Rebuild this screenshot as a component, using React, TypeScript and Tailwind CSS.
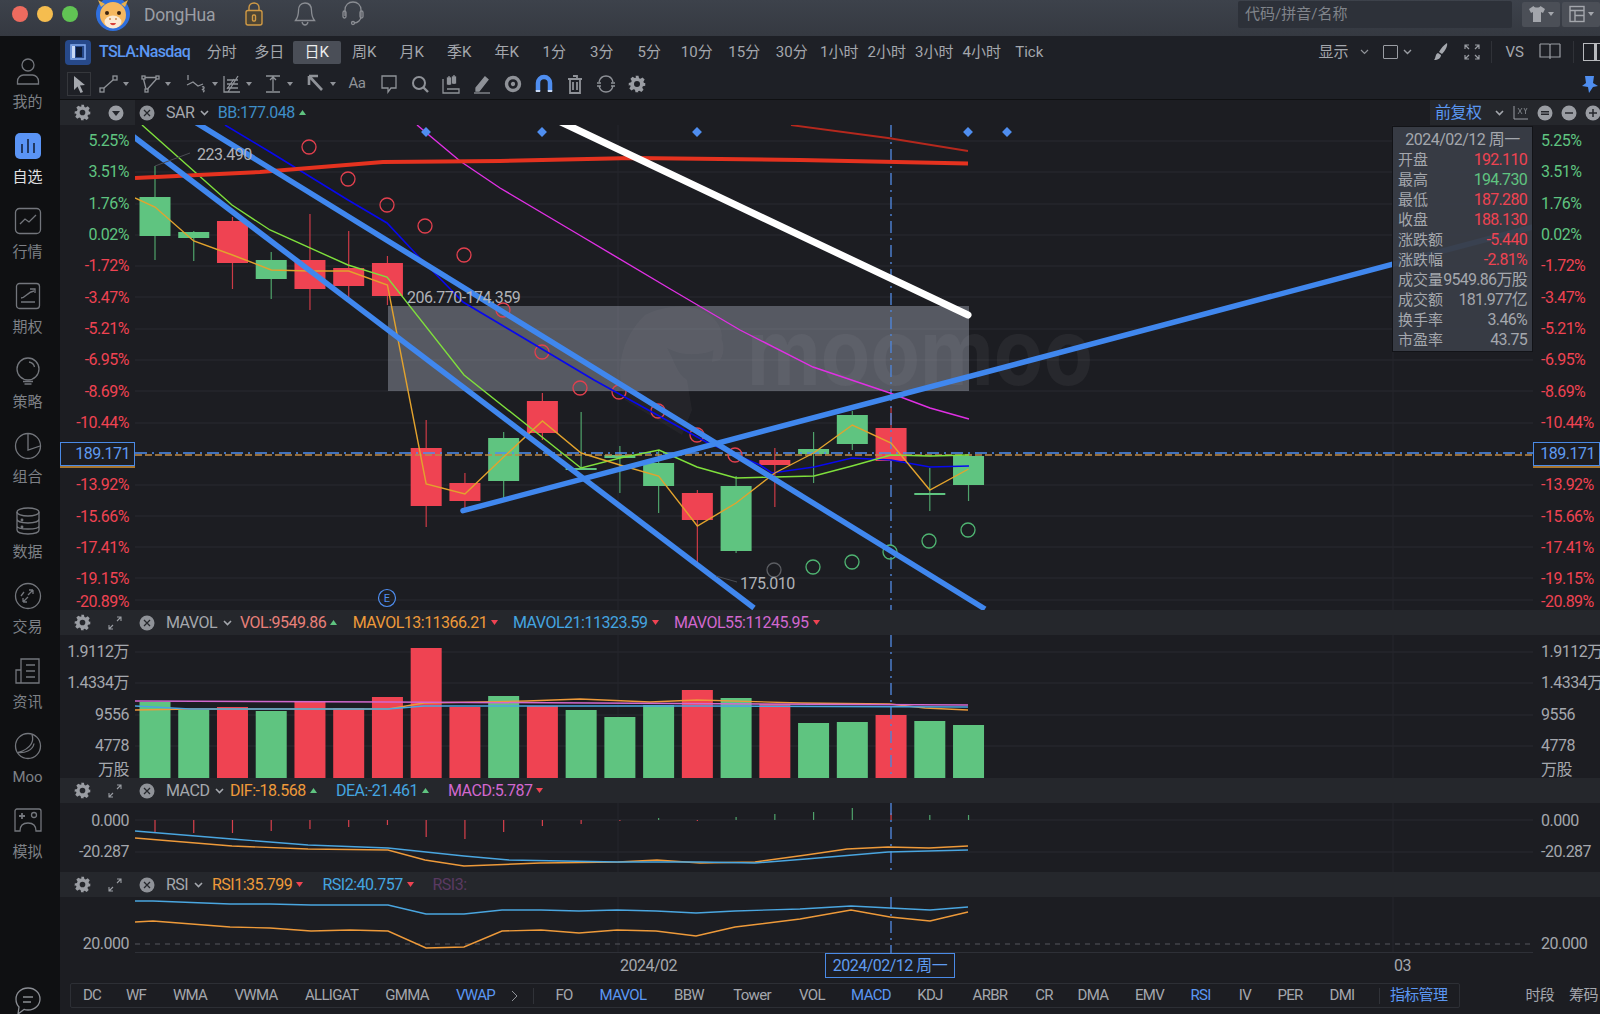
import React from "react";

const GREEN = "#5fc480";
const RED = "#ef4352";
const THICK = "#4087ee";

const xOf = (i: number) => 155 + i * 38.74;
const pts = (list: number[][]) => list.map((p) => p.join(",")).join(" ");
const series = (ys: number[]) => ys.map((y, i) => [xOf(i), y]);

// isUp, body top, body bottom, wick top, wick bottom
const candles: [boolean, number, number, number, number][] = [
  [true, 197, 236, 166, 260],
  [true, 232, 238, 231, 261],
  [false, 221, 263, 217, 289],
  [true, 260, 279, 252, 299],
  [false, 260, 289, 214, 310],
  [false, 268, 286, 231, 298],
  [false, 263, 296, 256, 305],
  [false, 448, 506, 420, 527],
  [false, 483, 501, 473, 508],
  [true, 438, 481, 432, 498],
  [false, 401, 433, 393, 440],
  [true, 468, 470, 412, 470],
  [true, 455, 458, 446, 493],
  [true, 463, 486, 450, 513],
  [false, 493, 520, 490, 563],
  [true, 486, 551, 476, 553],
  [false, 460, 465, 448, 507],
  [true, 449, 454, 432, 483],
  [true, 415, 444, 411, 450],
  [false, 428, 461, 407, 467],
  [true, 493, 495, 468, 511],
  [true, 456, 485, 456, 501],
];

const orangeMa = [
  [135, 198],
  ...series([207, 241, 255, 270, 271, 271, 285, 484, 494, 457, 421, 453, 465, 476, 526, 503, 473, 453, 425, 443, 490, 469]),
];
const limeMa = [
  [142, 125], [232, 205], [270, 230], [348, 265], [387, 277], [464, 375], [581, 468], [620, 458], [659, 450],
  [697, 467], [736, 478], [775, 477], [814, 476], [852, 466], [891, 455], [930, 456], [969, 455],
];
const navyMa = [
  [225, 125], [270, 152], [348, 200], [387, 223], [417, 255], [463, 302], [500, 324], [594, 380], [708, 443],
  [760, 465], [772, 473], [814, 467], [852, 458], [891, 460], [930, 467], [969, 466],
];
const pinkMa = [
  [417, 125], [460, 161], [500, 188], [576, 233], [672, 290], [740, 330], [813, 367], [890, 393], [930, 408], [969, 419],
];

const sarRed = [
  [309, 147], [348, 179], [387, 205], [425, 226], [464, 255], [503, 310], [542, 352], [580, 388], [619, 392], [658, 411], [697, 435], [735, 455],
];
const sarGreen = [[813, 567], [852, 562], [890, 552], [929, 541], [968, 530]];

const volBars: [boolean, number][] = [
  [true, 702], [true, 710], [false, 707], [true, 711], [false, 701], [false, 708], [false, 697], [false, 648],
  [false, 707], [true, 696], [false, 706], [true, 710], [true, 717], [true, 705], [false, 690], [true, 698],
  [false, 704], [true, 723], [true, 722], [false, 715], [true, 721], [true, 725],
];

const macdBars: [boolean, number][] = [
  [false, 833], [false, 833], [false, 833], [false, 831], [false, 829], [false, 827], [false, 825], [false, 837],
  [false, 839], [false, 832], [false, 826], [false, 824], [false, 821], [true, 818], [false, 821], [true, 817],
  [true, 814], [true, 812], [true, 808], [false, 813], [true, 815], [true, 815],
];

const leftPct: [string, boolean][] = [
  ["5.25%", true], ["3.51%", true], ["1.76%", true], ["0.02%", true], ["-1.72%", false], ["-3.47%", false], ["-5.21%", false],
  ["-6.95%", false], ["-8.69%", false], ["-10.44%", false],
];
const leftPct2: [string, boolean][] = [["-13.92%", false], ["-15.66%", false], ["-17.41%", false], ["-19.15%", false]];

const gridYs = [141, 172, 204, 235, 266, 297, 329, 360, 391, 423, 485, 516, 547, 578, 600];

function Crosshair({ y1, y2 }: { y1: number; y2: number }) {
  return <line x1={891} x2={891} y1={y1} y2={y2} stroke="#4f84d6" strokeWidth={1.4} strokeDasharray="12 5 2 5" />;
}

function PctAxis({ side }: { side: "left" | "right" }) {
  const align = side === "left" ? "justify-end pr-[6px]" : "justify-start pl-[8px]";
  const row = `flex h-[31.3px] items-center whitespace-nowrap ${align}`;
  return (
    <div className="pt-[0.5px] text-[16px] tracking-[-0.5px]">
      {leftPct.map(([t, up]) => (
        <div key={t} className={`${row} ${up ? "text-[#5fc480]" : "text-[#ef4352]"}`}>
          {t}
        </div>
      ))}
      <div className="flex h-[31.3px] items-center">
        <div className="flex h-[24px] w-full items-center justify-end border border-[#4a8ae6] pr-[4px] text-[#5f9bf0] shadow-[0_2px_0_#a8752e]">
          189.171
        </div>
      </div>
      {leftPct2.map(([t]) => (
        <div key={t} className={`${row} text-[#ef4352]`}>
          {t}
        </div>
      ))}
      <div className={`${row} -mt-[9px] text-[#ef4352]`}>-20.89%</div>
    </div>
  );
}

function GrayAxis({ labels, side, pad }: { labels: string[]; side: "left" | "right"; pad: string }) {
  const align = side === "left" ? "justify-end pr-[6px]" : "justify-start pl-[8px]";
  return (
    <div className={`${pad} overflow-hidden text-[16px] tracking-[-0.5px] text-[#a4a7ad]`}>
      {labels.map((t) => (
        <div key={t} className={`flex h-[31.3px] items-center whitespace-nowrap ${align} ${t === "万股" ? "-mt-[7px]" : ""}`}>
          {t}
        </div>
      ))}
    </div>
  );
}

function Tri({ up, red }: { up?: boolean; red?: boolean }) {
  return (
    <svg width="7" height="5" viewBox="0 0 7 5" className="ml-[4px] shrink-0">
      <path d={up ? "M3.5 0L7 5H0z" : "M0 0h7L3.5 5z"} fill={red ? RED : GREEN} />
    </svg>
  );
}

function Chevron() {
  return (
    <svg width="9" height="6" viewBox="0 0 9 6" className="ml-[6px] shrink-0">
      <path d="M1 1l3.5 3.5L8 1" stroke="#a4a7ad" strokeWidth="1.6" fill="none" />
    </svg>
  );
}

function Gear({ size = 17 }: { size?: number }) {
  return (
    <svg width={size} height={size} viewBox="0 0 24 24" className="shrink-0">
      <path
        fillRule="evenodd"
        fill="#9a9da3"
        d="M10 1h4l.7 3.2 1.9.8 2.8-1.7 2.8 2.8-1.7 2.8.8 1.9L23 10.5v3.9l-3.2.7-.8 1.9 1.7 2.8-2.8 2.8-2.8-1.7-1.9.8L14 23h-4l-.7-3.2-1.9-.8-2.8 1.7-2.8-2.8 1.7-2.8-.8-1.9L1 14.4v-3.9l3.2-.7.8-1.9-1.7-2.8 2.8-2.8 2.8 1.7 1.9-.8zM12 8a4 4 0 100 8 4 4 0 000-8z"
      />
    </svg>
  );
}

function CloseDot() {
  return (
    <svg width="16" height="16" viewBox="0 0 16 16" className="shrink-0">
      <circle cx="8" cy="8" r="7.5" fill="#8f9298" />
      <path d="M5 5l6 6M11 5l-6 6" stroke="#25272c" strokeWidth="1.3" />
    </svg>
  );
}

function Expand() {
  return (
    <svg width="14" height="14" viewBox="0 0 14 14" fill="none" stroke="#9a9da3" strokeWidth="1.1" className="shrink-0">
      <path d="M1 9v4h4M1 13l4-4M13 5V1H9M13 1L9 5" />
    </svg>
  );
}

function IndicatorHeader({ name, nameW, items }: { name: string; nameW: string; items: React.ReactNode }) {
  return (
    <div className="flex h-[25px] items-center bg-[#25272c] text-[16px] tracking-[-0.5px]">
      <div className="flex w-[75px] items-center pl-[14px]">
        <Gear />
        <div className="ml-[17px]">
          <Expand />
        </div>
      </div>
      <div className="ml-[4px]">
        <CloseDot />
      </div>
      <div className={`ml-[11px] flex items-center text-[#a4a7ad] ${nameW}`}>
        {name}
        <Chevron />
      </div>
      {items}
    </div>
  );
}

function Reading({ text, color, width, up, red }: { text: string; color: string; width: string; up?: boolean; red?: boolean }) {
  return (
    <div className={`flex items-center whitespace-nowrap ${color} ${width}`}>
      {text}
      <Tri up={up} red={red} />
    </div>
  );
}

function Ico({ children, w = 20 }: { children: React.ReactNode; w?: number }) {
  return (
    <svg width={w} height={20} viewBox={`0 0 ${w} 20`} fill="none" stroke="#8f9298" strokeWidth="1.3" className="shrink-0">
      {children}
    </svg>
  );
}

function ToolCaret() {
  return (
    <svg width="6" height="4" viewBox="0 0 6 4" className="ml-[4px] shrink-0">
      <path d="M0 0h6L3 4z" fill="#8f9298" />
    </svg>
  );
}

function NavIcon({ children }: { children: React.ReactNode }) {
  return (
    <svg width="28" height="28" viewBox="0 0 28 28" fill="none" stroke="#73767c" strokeWidth="1.3">
      {children}
    </svg>
  );
}

const nav: { label: string; icon: React.ReactNode; active?: boolean }[] = [
  {
    label: "我的",
    icon: (
      <NavIcon>
        <circle cx="14" cy="8" r="6" />
        <path d="M3.5 27v-2.5c0-4 3-6.500 6-6.500h9c3 0 6 2.500 6 6.500V27z" />
      </NavIcon>
    ),
  },
  {
    label: "自选",
    active: true,
    icon: (
      <svg width="26" height="26" viewBox="0 0 26 26">
        <rect width="26" height="26" rx="5" fill="#5a94f5" />
        <path d="M7 11v9M13 6v14M19 10v10" stroke="#14233f" strokeWidth="1.6" />
      </svg>
    ),
  },
  {
    label: "行情",
    icon: (
      <NavIcon>
        <rect x="1.5" y="1.5" width="25" height="25" rx="4" />
        <path d="M6 17l5-5 4 3 7-7" />
      </NavIcon>
    ),
  },
  {
    label: "期权",
    icon: (
      <NavIcon>
        <rect x="2.5" y="1.5" width="23" height="25" rx="3" />
        <path d="M7 16c5 0 6-6 13-7M16 7h5v4M7 20h14" />
      </NavIcon>
    ),
  },
  {
    label: "策略",
    icon: (
      <NavIcon>
        <circle cx="14" cy="12" r="11" />
        <path d="M15 5c3 .5 5 2.500 5.500 5M9 24.500h10M10.500 27h7" />
      </NavIcon>
    ),
  },
  {
    label: "组合",
    icon: (
      <NavIcon>
        <circle cx="14" cy="14" r="12.5" />
        <path d="M14 1.5V18l12-4" />
      </NavIcon>
    ),
  },
  {
    label: "数据",
    icon: (
      <NavIcon>
        <ellipse cx="14" cy="5" rx="11" ry="4" />
        <path d="M3 5v18c0 2.500 5 4 11 4s11-1.500 11-4V5M3 12c0 2.500 5 4 11 4s11-1.500 11-4M3 19c0 2.500 5 3 11 3s11-.5 11-3" />
        <circle cx="8" cy="13" r=".8" />
        <circle cx="8" cy="20" r=".8" />
      </NavIcon>
    ),
  },
  {
    label: "交易",
    icon: (
      <NavIcon>
        <circle cx="14" cy="14" r="12.5" />
        <path d="M19 8l-5 5M19 8h-4M19 8v4M9 20l5-5M9 20h4M9 20v-4M7 14l3-4" />
      </NavIcon>
    ),
  },
  {
    label: "资讯",
    icon: (
      <NavIcon>
        <path d="M7 26V2h18v24zM7 13H2v13h5M12 8h9M12 14h9M12 20h9" />
      </NavIcon>
    ),
  },
  {
    label: "Moo",
    icon: (
      <NavIcon>
        <circle cx="14" cy="14" r="12.5" />
        <path d="M18 2.500c2 6 0 14-14 18 6 1 15-2 16-9" />
      </NavIcon>
    ),
  },
  {
    label: "模拟",
    icon: (
      <NavIcon>
        <path d="M3 2h22a2 2 0 012 2v20h-5c0-5-2-8-8-8s-8 3-8 8H1V4a2 2 0 012-2z" />
        <path d="M8 6v6M5 9h6" strokeWidth="1.8" />
        <circle cx="20" cy="8" r="2.5" />
      </NavIcon>
    ),
  },
];

function Sidebar() {
  return (
    <div className="flex h-full w-[60px] shrink-0 flex-col items-center bg-[#0f1012] pt-[21px] pr-[5px]">
      {nav.map((n) => (
        <div key={n.label} className="flex h-[75px] w-full flex-col items-center">
          <div className="flex h-[28px] items-center">{n.icon}</div>
          <div className={`mt-[7px] text-[15px] leading-[20px] ${n.active ? "text-[#e0e1e3]" : "text-[#7d8086]"}`}>{n.label}</div>
        </div>
      ))}
      <div className="mt-auto -mb-[2px] h-[30px]">
        <svg width="28" height="30" viewBox="0 0 28 30" fill="none" stroke="#8a8d93" strokeWidth="1.3">
          <path d="M14 2c7 0 12 5 12 11s-5 11-12 11c-1.500 0-3-.2-4-.6L4 28l1-7c-2-2-3-5-3-8C2 7 7 2 14 2z" />
          <path d="M9 11h10M9 16h8" strokeWidth="1.7" />
        </svg>
      </div>
    </div>
  );
}

function TopBar() {
  return (
    <div className="flex h-[36px] shrink-0 items-center overflow-hidden bg-gradient-to-b from-[#3d424b] to-[#353941] pb-[8px]">
      <div className="ml-[12px] h-[16px] w-[16px] rounded-full bg-[#ed6b5f]" />
      <div className="ml-[9px] h-[16px] w-[16px] rounded-full bg-[#f5bd4f]" />
      <div className="ml-[9px] h-[16px] w-[16px] rounded-full bg-[#61c454]" />
      <svg width="36" height="36" viewBox="0 -5 36 36" className="ml-[17px] shrink-0">
        <circle cx="18" cy="13" r="17" fill="#2f6fdd" />
        <path d="M6 6l-3-7 7 4zM30 6l3-7-7 4z" fill="#e8b04c" />
        <ellipse cx="18" cy="14" rx="13" ry="13" fill="#f5b860" />
        <ellipse cx="18" cy="21" rx="8.5" ry="6.5" fill="#fbe9d3" />
        <circle cx="12" cy="12" r="2" fill="#3b2410" />
        <circle cx="24" cy="12" r="2" fill="#3b2410" />
        <path d="M15 22c1 3 5 3 6 0z" fill="#d8403a" />
        <circle cx="15" cy="18" r="1" fill="#c98a50" />
        <circle cx="21" cy="18" r="1" fill="#c98a50" />
      </svg>
      <div className="mt-[2px] ml-[13px] w-[73px] text-[17.5px] tracking-[-0.2px] text-[#9b9ea4]">DongHua</div>
      <svg width="20" height="24" viewBox="0 0 20 24" fill="none" stroke="#d19a45" strokeWidth="1.4" className="ml-[27px]">
        <path d="M5 9V5.500C5 3 7 1 10 1s5 2 5 4.500V9" />
        <rect x="2" y="8.5" width="16" height="14.5" rx="2" fill="#4d4534" />
        <rect x="8.5" y="13" width="3" height="6" rx="1" />
      </svg>
      <svg width="22" height="24" viewBox="0 0 22 24" fill="none" stroke="#8a8d93" strokeWidth="1.3" className="ml-[30px]">
        <path d="M11 1c-4.500 0-6.500 3.500-6.500 7.500 0 5-1.500 8-3 10h19c-1.500-2-3-5-3-10C17.500 4.500 15.500 1 11 1zM8 20c.5 2 1.500 3 3 3s2.500-1 3-3" />
      </svg>
      <svg width="22" height="26" viewBox="0 0 22 26" fill="none" stroke="#8a8d93" strokeWidth="1.3" className="ml-[26px]">
        <path d="M3 15V9c0-5 3.500-8 8-8s8 3 8 8v6c0 4-3 7-7 7" />
        <rect x="1" y="10" width="3" height="7" rx="1.5" />
        <rect x="18" y="10" width="3" height="7" rx="1.5" />
        <circle cx="11" cy="22" r="1.5" />
      </svg>
      <div className="ml-auto flex h-[27px] w-[274px] items-center rounded-[2px] bg-[#2d3139] pl-[7px] text-[15px] text-[#80848b]">
        代码/拼音/名称
      </div>
      <div className="ml-[10px] flex h-[25px] w-[38px] items-center justify-center gap-[3px] rounded-[2px] bg-[#4b4f57]">
        <svg width="16" height="18" viewBox="0 0 16 18">
          <path d="M4.5 1L0 4l2 4 2-1v10h8V7l2 1 2-4-4.500-3C10.500 3 5.500 3 4.500 1z" fill="#a3a6ac" />
        </svg>
        <Caret6 />
      </div>
      <div className="ml-[2px] flex h-[25px] w-[38px] items-center justify-center gap-[3px] rounded-[2px] bg-[#4b4f57]">
        <svg width="16" height="18" viewBox="0 0 16 18" fill="none" stroke="#a3a6ac" strokeWidth="1.4">
          <rect x="1" y="1.5" width="14" height="15" />
          <path d="M1 5.500h14M6 5.500v11M6 10.500h9" />
        </svg>
        <Caret6 />
      </div>
    </div>
  );
}

function Caret6() {
  return (
    <svg width="6" height="4" viewBox="0 0 6 4">
      <path d="M0 0h6L3 4z" fill="#a3a6ac" />
    </svg>
  );
}

const periods = ["分时", "多日", "日K", "周K", "月K", "季K", "年K", "1分", "3分", "5分", "10分", "15分", "30分", "1小时", "2小时", "3小时", "4小时", "Tick"];

function PeriodRow() {
  return (
    <div className="flex h-[32px] shrink-0 items-center bg-[#1e2026] text-[15px] text-[#a4a7ad]">
      <div className="ml-[5px] flex h-[25px] w-[26px] items-center justify-center rounded-[4px] bg-[#27498a]">
        <svg width="16" height="16" viewBox="0 0 16 16">
          <rect x="1" y="1" width="14" height="14" fill="none" stroke="#7ea6ea" strokeWidth="1.6" />
          <rect x="6" y="3" width="6" height="10" fill="#0e1c38" />
          <rect x="2" y="2" width="3" height="12" fill="#c7d8f5" />
        </svg>
      </div>
      <div className="ml-[8px] w-[99px] whitespace-nowrap text-[16px] font-medium tracking-[-0.6px] text-[#5b97f2]">TSLA:Nasdaq</div>
      {periods.map((p) => (
        <div key={p} className={`flex h-[23px] w-[47.5px] shrink-0 items-center justify-center whitespace-nowrap rounded-[2px] ${p === "日K" ? "bg-[#4a4e57] text-[#eceded]" : ""}`}>
          {p}
        </div>
      ))}
      <div className="ml-auto flex items-center">{displayTools}</div>
    </div>
  );
}

const displayTools = (
  <>
    <span>显示</span>
    <svg width="9" height="6" viewBox="0 0 9 6" className="ml-[11px]">
      <path d="M1 1l3.500 3.500L8 1" stroke="#8f9298" strokeWidth="1.2" fill="none" />
    </svg>
    <div className="ml-[14px] h-[14px] w-[15px] rounded-[1px] border border-[#9a9da3]" />
    <svg width="9" height="6" viewBox="0 0 9 6" className="ml-[5px]">
      <path d="M1 1l3.500 3.500L8 1" stroke="#9a9da3" strokeWidth="1.4" fill="none" />
    </svg>
    <svg width="16" height="18" viewBox="0 0 16 18" className="ml-[21px]">
      <path d="M14 0c1 3-2 8-5 11l-3-2C8 5 11 2 14 0zM5 10l3 2c0 3-3 5-7 5 2-2 1-6 4-7z" fill="#a4a7ad" />
    </svg>
    <svg width="16" height="16" viewBox="0 0 16 16" fill="none" stroke="#9a9da3" strokeWidth="1.2" className="ml-[15px]">
      <path d="M1 5V1h4M15 5V1h-4M1 11v4h4M15 11v4h-4M1 1l4 4M15 1l-4 4M1 15l4-4M15 15l-4-4" />
    </svg>
    <div className="ml-[11px] h-[22px] w-px bg-[#303238]" />
    <span className="ml-[14px]">VS</span>
    <svg width="22" height="18" viewBox="0 0 22 18" fill="none" stroke="#9a9da3" strokeWidth="1.2" className="ml-[15px]">
      <path d="M1 1h9c.6 0 1 .4 1 1v14M21 1h-9c-.6 0-1 .4-1 1M1 1v13h10M21 1v13H11" />
    </svg>
    <div className="ml-[12px] h-[22px] w-px bg-[#303238]" />
    <div className="ml-[9px] h-[18px] w-[17px] border border-r-0 border-[#b8babe] pl-[10px]">
      <div className="h-full w-[3px] bg-[#b8babe]" />
    </div>
  </>
);

function DrawRow() {
  return (
    <div className="flex h-[32px] shrink-0 items-center border-b border-[#0f1012] bg-[#1e2026]">
      <div className="ml-[7px] flex h-[24px] w-[24px] items-center justify-center border border-[#35373c]">
        <svg width="13" height="18" viewBox="0 0 13 18">
          <path d="M1 1l11 9-5 .5 3 6.500-2.500 1-3-6.500L1 15z" fill="#a4a7ad" />
        </svg>
      </div>
      <div className="ml-[8px] flex w-[42px] items-center">
        <Ico>
          <rect x="1" y="14" width="4" height="4" />
          <rect x="14" y="2" width="4" height="4" />
          <path d="M5 14l9-8" />
        </Ico>
        <ToolCaret />
      </div>
      <div className="flex w-[45px] items-center">
        <Ico>
          <rect x="1" y="2" width="3" height="3" />
          <rect x="15" y="2" width="3" height="3" />
          <rect x="4" y="15" width="3" height="3" />
          <path d="M4 3.500h11M15.500 5L6.500 15M2.500 5L5 15" />
        </Ico>
        <ToolCaret />
      </div>
      <div className="flex w-[36px] items-center">
        <Ico w={22}>
          <path d="M2 1v5M1 11l6-3 5 4 5-2M16 13c2-1 3 1 1 2l-1 1c2-1 3 1 1 2" />
        </Ico>
        <ToolCaret />
      </div>
      <div className="flex w-[41px] items-center">
        <Ico>
          <path d="M2 2v16h16M5 6h11M5 10h11M5 14h11M16 2L6 18M12 5L5 15" />
        </Ico>
        <ToolCaret />
      </div>
      <div className="flex w-[43px] items-center">
        <Ico>
          <path d="M3 2h14M3 18h14M10 3v14M7 6l3-3 3 3" />
        </Ico>
        <ToolCaret />
      </div>
      <div className="flex w-[35px] items-center">
        <Ico>
          <path d="M3 2h9M3 2v9M3 2l13 14" strokeWidth="2.6" />
        </Ico>
        <ToolCaret />
      </div>
      <div className="flex w-[32px] justify-center text-[15px] tracking-[-0.5px] text-[#8f9298]">Aa</div>
      <div className="flex w-[31px] justify-center">
        <Ico>
          <path d="M3 2h14v12h-5l-3 4v-4H3z" />
        </Ico>
      </div>
      <div className="flex w-[31px] justify-center">
        <Ico>
          <circle cx="9" cy="9" r="6" strokeWidth="2" />
          <path d="M13 13l5 5" strokeWidth="2.4" />
        </Ico>
      </div>
      <div className="flex w-[31px] justify-center">
        <Ico>
          <path d="M2 5v14h16v-4H6M8 2v9M13 1v9" />
          <rect x="6.5" y="4" width="3" height="6" fill="#8f9298" />
          <rect x="11.5" y="3" width="3" height="6" fill="#8f9298" />
        </Ico>
      </div>
      <div className="flex w-[31px] justify-center">
        <Ico>
          <path d="M4 14L13 3l3 2.500L7 17H4z" fill="#8f9298" />
          <path d="M2 19h16" />
        </Ico>
      </div>
      <div className="flex w-[31px] justify-center">
        <Ico>
          <circle cx="10" cy="10" r="6.5" strokeWidth="3.4" />
          <circle cx="10" cy="10" r="1.5" fill="#8f9298" />
        </Ico>
      </div>
      <div className="flex w-[31px] justify-center">
        <svg width="20" height="20" viewBox="0 0 20 20" fill="none" stroke="#4f8ef0" strokeWidth="4.5">
          <path d="M4 17V9a6 6 0 0112 0v8" />
          <path d="M1.8 17h4.400M13.800 17h4.400" stroke="#c7d8f5" strokeWidth="1.8" />
        </svg>
      </div>
      <div className="flex w-[31px] justify-center">
        <Ico>
          <path d="M3 5h14M8 2h4v3M5 5v14h10V5zM8 8v8M12 8v8" strokeWidth="1.8" />
        </Ico>
      </div>
      <div className="flex w-[31px] justify-center">
        <Ico>
          <path d="M3 8c1-4 4-6 7-6s6 2 7 6M17 12c-1 4-4 6-7 6s-6-2-7-6M1 9h4M15 9h4M1 12h4M15 12h4" />
        </Ico>
      </div>
      <div className="flex w-[31px] justify-center">
        <Gear size={18} />
      </div>
      <svg width="18" height="20" viewBox="0 0 18 20" className="mr-[1px] ml-auto">
        <path d="M4 2h9l-1 7 5 3-5 1-4 6-1-6-6-1 4-3z" fill="#4f8ef0" />
      </svg>
    </div>
  );
}

function MainChart() {
  return (
    <div className="relative flex h-[485px]">
      <div className="w-[75px] shrink-0">
        <PctAxis side="left" />
      </div>
      <svg width="1398" height="485" viewBox="135 125 1398 485" className="shrink-0">
        {gridYs.map((y) => (
          <line key={y} x1={135} x2={1533} y1={y} y2={y} stroke="#282a31" strokeWidth={1} />
        ))}
        <line x1={618} x2={618} y1={125} y2={610} stroke="#24262c" />
        <line x1={1393} x2={1393} y1={125} y2={610} stroke="#24262c" />

        <text x={747} y={385} fontFamily="Inter, sans-serif" fontWeight={700} fontSize={92} fill="#fff" fillOpacity={0.05} textLength={346} lengthAdjust="spacingAndGlyphs">
          moomoo
        </text>
        <path d="M625 400c-10-30-5-60 20-85 25-12 55-12 70 5 12 14 8 30-10 33-18 3-28 0-38-5 8 14 10 26 20 32l5 30-10 25-57-35zM716 330c8 8 10 22 4 30l-8 2z" fill="#fff" fillOpacity={0.035} />

        {candles.map(([up, top, bot, wt, wb], i) => {
          const c = up ? GREEN : RED;
          const x = xOf(i);
          return (
            <g key={i}>
              <line x1={x} x2={x} y1={wt} y2={wb} stroke={up ? "#4fa36b" : "#cc3a46"} strokeWidth={1.2} />
              <rect x={x - 15.5} y={top} width={31} height={bot - top} fill={c} />
            </g>
          );
        })}

        <rect x={388} y={306} width={581} height={85} fill="#aeb4c2" fillOpacity={0.4} />

        <line x1={135} x2={1533} y1={453} y2={453} stroke="#4f8ef0" strokeWidth={1.3} strokeDasharray="12 5 2 5" />
        <line x1={135} x2={1533} y1={455} y2={455} stroke="#c08a45" strokeWidth={1.5} strokeDasharray="7 3" />
        <Crosshair y1={125} y2={610} />

        {sarRed.map(([x, y]) => (
          <circle key={x} cx={x} cy={y} r={7} fill="none" stroke="#e2404e" strokeWidth={1.3} />
        ))}
        <circle cx={774} cy={570} r={7} fill="none" stroke="#5c5e63" strokeWidth={1.3} />
        {sarGreen.map(([x, y]) => (
          <circle key={x} cx={x} cy={y} r={7} fill="none" stroke="#4fb572" strokeWidth={1.3} />
        ))}

        <polyline points={pts(navyMa)} fill="none" stroke="#0808ee" strokeWidth={1.6} />
        <polyline points={pts(pinkMa)} fill="none" stroke="#e030e4" strokeWidth={1.4} />
        <polyline points={pts(limeMa)} fill="none" stroke="#7fe03c" strokeWidth={1.4} />
        <polyline points={pts(orangeMa)} fill="none" stroke="#e3a32d" strokeWidth={1.4} />

        <polyline points="135,178 260,172 383,162 500,161 633,158 800,160 968,163.5" fill="none" stroke="#e5321f" strokeWidth={4} />
        <polyline points="791,125 888,138 968,151" fill="none" stroke="#b5281d" strokeWidth={1.8} />
        <line x1={561} y1={122} x2={968} y2={315} stroke="#fff" strokeWidth={7} strokeLinecap="round" />

        <line x1={130} y1={134} x2={754} y2={608} stroke={THICK} strokeWidth={5.5} />
        <line x1={195} y1={122} x2={985} y2={609} stroke={THICK} strokeWidth={5.5} />
        <line x1={463} y1={510.7} x2={1533} y2={227} stroke={THICK} strokeWidth={5.5} strokeLinecap="round" />

        {[426, 542, 697, 968, 1007].map((x) => (
          <rect key={x} x={x - 3.5} y={128.5} width={7} height={7} fill="#4f8ef0" transform={`rotate(45 ${x} 132)`} />
        ))}

        <line x1={155} y1={166} x2={190} y2={153} stroke="#4a4c52" />
        <line x1={716} y1={576} x2={737} y2={582} stroke="#4a4c52" />
        <g fontFamily="Roboto, sans-serif" fontSize={16} letterSpacing={-0.5} fill="#b0b2b7">
          <text x={197} y={160}>223.490</text>
          <text x={407} y={303}>206.770-174.359</text>
          <text x={740} y={589}>175.010</text>
        </g>
        <circle cx={387} cy={598} r={8.5} fill="none" stroke="#4f8ef0" strokeWidth={1.2} />
        <text x={387} y={602} textAnchor="middle" fontFamily="Roboto, sans-serif" fontSize={11} fill="#4f8ef0">
          E
        </text>
      </svg>
      <div className="w-[67px] shrink-0 overflow-hidden">
        <PctAxis side="right" />
      </div>

      <Tooltip />
    </div>
  );
}

const tipRows: [string, string, string][] = [
  ["开盘", "192.110", "text-[#ef4352]"],
  ["最高", "194.730", "text-[#5fc480]"],
  ["最低", "187.280", "text-[#ef4352]"],
  ["收盘", "188.130", "text-[#ef4352]"],
  ["涨跌额", "-5.440", "text-[#ef4352]"],
  ["涨跌幅", "-2.81%", "text-[#ef4352]"],
  ["成交量", "9549.86万股", "text-[#a4a7ad]"],
  ["成交额", "181.977亿", "text-[#a4a7ad]"],
  ["换手率", "3.46%", "text-[#a4a7ad]"],
  ["市盈率", "43.75", "text-[#a4a7ad]"],
];

function Tooltip() {
  return (
    <div className="absolute top-[1px] left-[1332px] h-[226px] w-[141px] border border-[#121317] bg-[#393d47]/95 px-[5px] pt-[3px] text-[16px] tracking-[-0.5px] text-[#a4a7ad]">
      <div className="flex h-[20px] items-center justify-center whitespace-nowrap">2024/02/12 周一</div>
      {tipRows.map(([k, v, c]) => (
        <div key={k} className="flex h-[20px] items-center justify-between whitespace-nowrap">
          <span className="text-[15px] tracking-normal">{k}</span>
          <span className={`tracking-[-0.7px] ${c}`}>{v}</span>
        </div>
      ))}
    </div>
  );
}

function SarHeader() {
  return (
    <div className="flex h-[25px] items-center text-[16px] tracking-[-0.5px]">
      <div className="flex h-full w-[75px] items-center bg-[#25272c] pl-[14px]">
        <Gear />
        <svg width="16" height="16" viewBox="0 0 16 16" className="ml-[17px]">
          <circle cx="8" cy="8" r="7.5" fill="#9a9da3" />
          <path d="M4 6h8l-4 5z" fill="#25272c" />
        </svg>
      </div>
      <div className="ml-[4px]">
        <CloseDot />
      </div>
      <div className="ml-[11px] flex w-[51.8px] items-center text-[#a4a7ad]">
        SAR
        <Chevron />
      </div>
      <Reading text="BB:177.048" color="text-[#3f8fc8]" width="w-[100px]" up />
      <div className="ml-auto flex h-full w-[170px] items-center bg-[#25272c] pl-[5px] text-[#5b97f2]">
        <span className="shrink-0 whitespace-nowrap">前复权</span>
        <svg width="9" height="6" viewBox="0 0 9 6" className="ml-[13px] shrink-0">
          <path d="M1 1l3.500 3.500L8 1" stroke="#a4a7ad" strokeWidth="1.6" fill="none" />
        </svg>
        <svg width="16" height="16" viewBox="0 0 16 16" fill="none" stroke="#9a9da3" className="ml-[9px] shrink-0">
          <path d="M1 1v13h14" />
          <path d="M5 3l4 6M9 3L5 9M11 3l1.500 3L14 3M12.500 6v3" strokeWidth=".7" />
        </svg>
        {["M4 6.800h8M4 9.200h8", "M4 8h8", "M4 8h8M8 4v8"].map((d, i) => (
          <svg key={i} width="16" height="16" viewBox="0 0 16 16" className="ml-[8px] shrink-0">
            <circle cx="8" cy="8" r="7.5" fill="#9a9da3" />
            <path d={d} stroke="#25272c" strokeWidth="1.5" />
          </svg>
        ))}
      </div>
    </div>
  );
}

function VolumePanel() {
  return (
    <div className="flex h-[143px]">
      <div className="w-[75px] shrink-0">
        <GrayAxis labels={["1.9112万", "1.4334万", "9556", "4778", "万股"]} side="left" pad="pt-[1.5px]" />
      </div>
      <svg width="1398" height="143" viewBox="135 635 1398 143" className="shrink-0">
        {[652, 683, 715, 746].map((y) => (
          <line key={y} x1={135} x2={1533} y1={y} y2={y} stroke="#282a31" />
        ))}
        <line x1={618} x2={618} y1={635} y2={778} stroke="#24262c" />
        <line x1={1393} x2={1393} y1={635} y2={778} stroke="#24262c" />
        {volBars.map(([up, top], i) => (
          <rect key={i} x={xOf(i) - 15.5} y={top} width={31} height={778 - top} fill={up ? GREEN : RED} />
        ))}
        <Crosshair y1={635} y2={778} />
        <polyline points="135,710 190,709 388,709 424,703 527,701 580,699 650,702 697,700 800,703 890,704 925,708 968,710" fill="none" stroke="#ee9a3a" strokeWidth={1.3} />
        <polyline points="135,706 190,709 388,709 424,706 700,706 968,707" fill="none" stroke="#4aa6e0" strokeWidth={1.5} />
        <polyline points="135,701 388,702 968,705" fill="none" stroke="#d268cf" strokeWidth={1.5} />
      </svg>
      <div className="w-[67px] shrink-0">
        <GrayAxis labels={["1.9112万", "1.4334万", "9556", "4778", "万股"]} side="right" pad="pt-[1.5px]" />
      </div>
    </div>
  );
}

function MacdPanel() {
  return (
    <div className="flex h-[69px]">
      <div className="w-[75px] shrink-0">
        <GrayAxis labels={["0.000", "-20.287"]} side="left" pad="pt-[2px]" />
      </div>
      <svg width="1398" height="69" viewBox="135 803 1398 69" className="shrink-0">
        <line x1={135} x2={1533} y1={820} y2={820} stroke="#282a31" />
        <line x1={135} x2={1533} y1={852} y2={852} stroke="#282a31" />
        <line x1={618} x2={618} y1={803} y2={872} stroke="#24262c" />
        <line x1={1393} x2={1393} y1={803} y2={872} stroke="#24262c" />
        {macdBars.map(([up, y], i) => (
          <line key={i} x1={xOf(i)} x2={xOf(i)} y1={820} y2={y} stroke={up ? "#4fa36b" : "#d8404c"} strokeWidth={1.2} />
        ))}
        <Crosshair y1={803} y2={872} />
        <polyline points="135,838 232,846 308,849 388,850 425,860 464,866 540,863 618,862 657,860 700,863 755,862 806,855 847,849 888,847 929,848 968,846" fill="none" stroke="#ee9a3a" strokeWidth={1.4} />
        <polyline points="135,831 232,839 308,845 388,848 464,856 509,860 618,862 700,862 755,863 806,859 888,852 968,850" fill="none" stroke="#4aa6e0" strokeWidth={1.4} />
      </svg>
      <div className="w-[67px] shrink-0">
        <GrayAxis labels={["0.000", "-20.287"]} side="right" pad="pt-[2px]" />
      </div>
    </div>
  );
}

function RsiPanel() {
  return (
    <div className="flex h-[56px]">
      <div className="w-[75px] shrink-0">
        <GrayAxis labels={["20.000"]} side="left" pad="pt-[31px] h-[56px]" />
      </div>
      <svg width="1398" height="56" viewBox="135 897 1398 56" className="shrink-0">
        <line x1={618} x2={618} y1={897} y2={953} stroke="#24262c" />
        <line x1={1393} x2={1393} y1={897} y2={953} stroke="#24262c" />
        <line x1={135} x2={1533} y1={944} y2={944} stroke="#55575c" strokeDasharray="5 5" />
        <line x1={135} x2={1533} y1={952.5} y2={952.5} stroke="#2e3037" />
        <Crosshair y1={897} y2={953} />
        <polyline points="135,901 153,901 230,904 270,904 311,905 388,905 426,914 464,914 502,910 541,910 579,911 617,910 656,911 696,913 735,911 800,909 851,906 890,908 930,910 968,907" fill="none" stroke="#4aa6e0" strokeWidth={1.4} />
        <polyline points="135,922 153,921 230,927 270,928 311,931 350,930 388,931 426,948 464,947 502,931 541,930 579,933 617,930 656,931 696,936 735,927 800,919 851,910 890,917 930,921 968,912" fill="none" stroke="#ee9a3a" strokeWidth={1.4} />
      </svg>
      <div className="w-[67px] shrink-0">
        <GrayAxis labels={["20.000"]} side="right" pad="pt-[31px] h-[56px]" />
      </div>
    </div>
  );
}

function TimeAxis() {
  return (
    <div className="relative flex h-[30px] text-[16px] tracking-[-0.5px] text-[#a4a7ad]">
      <div className="ml-[560px] pt-[1px]">2024/02</div>
      <div className="ml-[717px] pt-[1px]">03</div>
      <div className="absolute top-0 left-[765px] flex h-[25px] w-[130px] items-center justify-center whitespace-nowrap border border-[#4a8ae6] text-[#5f9bf0]">
        2024/02/12 周一
      </div>
    </div>
  );
}

// label and its centre on the page, margins below are worked out from these
const tabsA: [string, number][] = [
  ["DC", 92], ["WF", 136], ["WMA", 190], ["VWMA", 256], ["ALLIGAT", 331.6], ["GMMA", 407], ["VWAP", 475.5],
];
const tabsB: [string, number][] = [
  ["FO", 564], ["MAVOL", 623], ["BBW", 689], ["Tower", 752], ["VOL", 812], ["MACD", 871], ["KDJ", 930], ["ARBR", 990], ["CR", 1044],
  ["DMA", 1093], ["EMV", 1149.5], ["RSI", 1200.5], ["IV", 1245], ["PER", 1290], ["DMI", 1342],
];
const activeTabs = ["VWAP", "MAVOL", "MACD", "RSI"];
const CELL = 60;

function TabCells({ tabs, start }: { tabs: [string, number][]; start: number }) {
  return (
    <>
      {tabs.map(([t, c], i) => (
        <span
          key={t}
          className={`flex w-[60px] shrink-0 justify-center whitespace-nowrap ${activeTabs.includes(t) ? "text-[#5b97f2]" : ""}`}
          style={{ marginLeft: i === 0 ? c - CELL / 2 - start : c - tabs[i - 1][1] - CELL }}
        >
          {t}
        </span>
      ))}
    </>
  );
}

function TabBar() {
  return (
    <div className="flex h-[25px] items-center text-[15px] tracking-[-0.7px] text-[#a4a7ad]">
      <div className="ml-[10px] flex h-full w-[1390px] items-center rounded-[2px] border border-[#2d2f35]">
        <TabCells tabs={tabsA} start={71} />
        <svg width="8" height="12" viewBox="0 0 8 12" className="ml-[5.5px] shrink-0">
          <path d="M1 1l5 5-5 5" stroke="#8f9298" fill="none" />
        </svg>
        <div className="ml-[14px] h-[16px] w-px shrink-0 bg-[#303238]" />
        <TabCells tabs={tabsB} start={534} />
        <div className="ml-[7px] h-[16px] w-px shrink-0 bg-[#303238]" />
        <span className="ml-[10px] whitespace-nowrap text-[#5b97f2]">指标管理</span>
      </div>
      <span className="ml-[65.5px] whitespace-nowrap">时段</span>
      <span className="ml-[15px] whitespace-nowrap">筹码</span>
    </div>
  );
}

export default function App() {
  return (
    <div className="flex h-[1014px] w-[1600px] flex-col overflow-hidden bg-[#1c1d22] font-[Roboto,'Noto_Sans_CJK_SC',sans-serif]">
      <TopBar />
      <div className="flex min-h-0 flex-1">
        <Sidebar />
        <div className="flex w-[1540px] flex-col">
          <PeriodRow />
          <DrawRow />
          <SarHeader />
          <MainChart />
          <IndicatorHeader
            name="MAVOL"
            nameW="w-[74px]"
            items={
              <>
                <Reading text="VOL:9549.86" color="text-[#e8807a]" width="w-[112.7px]" up />
                <Reading text="MAVOL13:11366.21" color="text-[#ee9a3a]" width="w-[160.3px]" red />
                <Reading text="MAVOL21:11323.59" color="text-[#44a5e0]" width="w-[161px]" red />
                <Reading text="MAVOL55:11245.95" color="text-[#d268cf]" width="w-[160px]" red />
              </>
            }
          />
          <VolumePanel />
          <IndicatorHeader
            name="MACD"
            nameW="w-[64px]"
            items={
              <>
                <Reading text="DIF:-18.568" color="text-[#ee9a3a]" width="w-[106px]" up />
                <Reading text="DEA:-21.461" color="text-[#44a5e0]" width="w-[112px]" up />
                <Reading text="MACD:5.787" color="text-[#d268cf]" width="w-[110px]" red />
              </>
            }
          />
          <MacdPanel />
          <IndicatorHeader
            name="RSI"
            nameW="w-[46px]"
            items={
              <>
                <Reading text="RSI1:35.799" color="text-[#ee9a3a]" width="w-[110.5px]" red />
                <Reading text="RSI2:40.757" color="text-[#44a5e0]" width="w-[110px]" red />
                <span className="text-[#5a3a62]">RSI3:</span>
              </>
            }
          />
          <RsiPanel />
          <TimeAxis />
          <TabBar />
        </div>
      </div>
    </div>
  );
}
